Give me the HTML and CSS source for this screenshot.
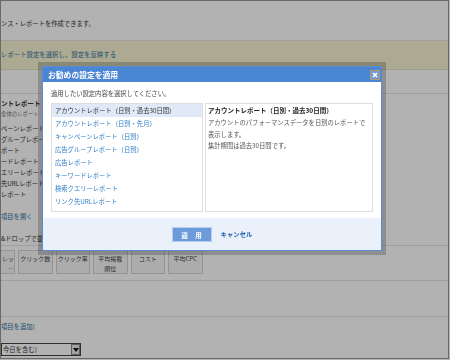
FILE: index.html
```html
<html>

<head>
    <meta charset="utf-8">
    <link rel="stylesheet" href="styles.css">
</head>

<body>
    <div class="page">
        <div class="intro">ンス・レポートを作成できます。</div>
        <div class="notice"><a class="link">レポート設定を選択し、設定を反映する</a></div>
        <div class="spacer"></div>
        <div class="reports">
            <div class="report-head">ントレポート</div>
            <div class="report-sub">全体のレポート</div>
            <ul class="report-list">
                <li>ペーンレポート</li>
                <li>グループレポート</li>
                <li>ポート</li>
                <li>ードレポート</li>
                <li>エリーレポート</li>
                <li>先URLレポート</li>
                <li>レポート</li>
            </ul>
            <a class="link open-link">項目を開く</a>
        </div>
        <div class="drag-note">&amp;ドロップで並</div>
        <div class="columns">
            <div class="col-btn partial">レッ<br>…</div>
            <div class="col-btn">クリック数</div>
            <div class="col-btn">クリック率</div>
            <div class="col-btn">平均掲載<br>順位</div>
            <div class="col-btn">コスト</div>
            <div class="col-btn">平均CPC</div>
        </div>
        <div class="empty-row"></div>
        <div class="add-row"><a class="link">項目を追加]</a></div>
        <div class="period">
            <div class="fake-select">
                <span class="select-text">今日を含む）</span>
                <span class="select-arrow">
                    <svg width="6" height="4" viewBox="0 0 6 4"><path d="M0 0h6L3 4z" fill="#111"/></svg>
                </span>
            </div>
        </div>
    </div>

    <div class="overlay"></div>

    <div class="dialog">
        <div class="dialog-title">
            <span>お勧めの設定を適用</span>
            <span class="close">
                <svg width="10" height="10" viewBox="0 0 10 10">
                    <rect x="0.5" y="0.5" width="9" height="9" fill="#6c9be0" stroke="#b59c5e"/>
                    <path d="M3 3l4 4M7 3l-4 4" stroke="#fff" stroke-width="1.6"/>
                </svg>
            </span>
        </div>
        <div class="dialog-body">
            <div class="lead">適用したい設定内容を選択してください。</div>
            <div class="picker">
                <ul class="choices">
                    <li class="selected">アカウントレポート（日別・過去30日間）</li>
                    <li>アカウントレポート（日別・先月）</li>
                    <li>キャンペーンレポート（日別）</li>
                    <li>広告グループレポート（日別）</li>
                    <li>広告レポート</li>
                    <li>キーワードレポート</li>
                    <li>検索クエリーレポート</li>
                    <li>リンク先URLレポート</li>
                </ul>
                <div class="detail">
                    <div class="detail-title">アカウントレポート（日別・過去30日間）</div>
                    <div class="detail-text">アカウントのパフォーマンスデータを日別のレポートで<br>表示します。<br>集計期間は過去30日間です。</div>
                </div>
            </div>
        </div>
        <div class="dialog-foot">
            <button class="apply">適 用</button>
            <a class="cancel">キャンセル</a>
        </div>
    </div>
</body>

</html>
```

FILE: styles.css
```css
body{
    margin: 0;
    font-family: "Noto Sans CJK JP", sans-serif;
    color: #333;
}

.page{
    width: 447px;
    height: 357px;
    border: 1px solid #999;
    overflow: hidden;
    background: #fff;
    font-size: 6.3px;
}

.link{
    color: #2a6f9e;
}

.intro{
    height: 22px;
    padding-top: 17px;
    line-height: 12px;
    border-bottom: 1px solid #e2e2e2;
}

.notice{
    height: 28px;
    line-height: 28px;
    background: #f7f4d2;
    border-bottom: 1px solid #e6e2bc;
    font-size: 6.4px;
}

.spacer{
    height: 23px;
    border-bottom: 1px solid #e2e2e2;
}

.reports{
    padding-top: 3px;
}

.report-head{
    line-height: 12px;
    font-weight: bold;
    font-size: 6.6px;
}

.report-sub{
    line-height: 10px;
    font-size: 5.4px;
    color: #777;
}

.report-list{
    list-style: none;
    margin: 4px 0 0;
    padding: 0;
    line-height: 11px;
}

.open-link{
    display: block;
    margin-top: 11px;
    line-height: 12px;
}

.drag-note{
    padding-top: 10px;
    line-height: 12px;
    border-bottom: 1px solid #e2e2e2;
}

.columns{
    display: flex;
    gap: 3px;
    padding: 4px 0 6px;
    border-bottom: 1px solid #e2e2e2;
}

.col-btn{
    box-sizing: border-box;
    width: 34.5px;
    height: 24px;
    padding-top: 3px;
    border: 1px solid #d4d4d4;
    background: #f6f6f6;
    text-align: center;
    line-height: 10px;
    font-size: 6px;
    color: #444;
}

.col-btn.partial{
    width: 14px;
    border-left: none;
    text-align: right;
    overflow: hidden;
    white-space: nowrap;
}

.empty-row{
    height: 35px;
    border-bottom: 1px solid #e2e2e2;
}

.add-row{
    padding-top: 4px;
    line-height: 12px;
}

.period{
    padding-top: 10px;
}

.fake-select{
    box-sizing: border-box;
    display: flex;
    align-items: center;
    justify-content: space-between;
    width: 80px;
    height: 13px;
    border: 1px solid #444;
    background: #fff;
}

.select-text{
    line-height: 11px;
    padding-left: 1px;
}

.select-arrow{
    display: flex;
    align-items: center;
    justify-content: center;
    box-sizing: border-box;
    width: 9px;
    height: 11px;
    border: 1px solid #888;
    background: #e8e8e8;
}

.overlay{
    position: fixed;
    top: 0;
    left: 0;
    right: 0;
    bottom: 0;
    background: rgba(0, 0, 0, 0.3);
}

.dialog{
    position: absolute;
    left: 42px;
    top: 66px;
    width: 338px;
    border: 1px solid #5b8bd3;
    background: #fff;
    box-shadow: 0 0 0 4px rgba(0, 0, 0, 0.2);
}

.dialog-title{
    display: flex;
    justify-content: space-between;
    align-items: center;
    height: 15px;
    padding-left: 5px;
    padding-right: 1px;
    background: #4a86d4;
    color: #fff;
    font-weight: bold;
    font-size: 7.8px;
    line-height: 15px;
}

.close{
    display: flex;
}

.dialog-body{
    padding: 6px 8px 6px;
    font-size: 6.3px;
}

.lead{
    line-height: 12px;
    margin-bottom: 3px;
    color: #444;
}

.picker{
    display: flex;
    gap: 2px;
    height: 109px;
}

.choices{
    box-sizing: border-box;
    width: 152px;
    margin: 0;
    padding: 0;
    list-style: none;
    border: 1px solid #dedede;
    line-height: 13px;
    color: #2e7cc6;
}

.choices li{
    padding-left: 3px;
}

.choices .selected{
    background: #dfe9f7;
    color: #333;
}

.detail{
    box-sizing: border-box;
    width: 168px;
    border: 1px solid #dedede;
    padding-left: 2px;
}

.detail-title{
    line-height: 13px;
    font-weight: bold;
    font-size: 6.5px;
    color: #222;
}

.detail-text{
    line-height: 11.5px;
    color: #555;
}

.dialog-foot{
    display: flex;
    justify-content: center;
    align-items: flex-start;
    gap: 9px;
    height: 23px;
    padding-top: 9px;
    background: #eaf1fb;
}

.apply{
    width: 40px;
    height: 15px;
    padding: 0;
    border: 1px solid #b9cdee;
    background: #6d9ad9;
    color: #fff;
    font-family: "Noto Sans CJK JP", sans-serif;
    font-weight: bold;
    font-size: 6.5px;
    letter-spacing: 3px;
    text-indent: 3px;
}

.cancel{
    line-height: 15px;
    font-weight: bold;
    font-size: 6.4px;
    color: #1f5fae;
}
```
